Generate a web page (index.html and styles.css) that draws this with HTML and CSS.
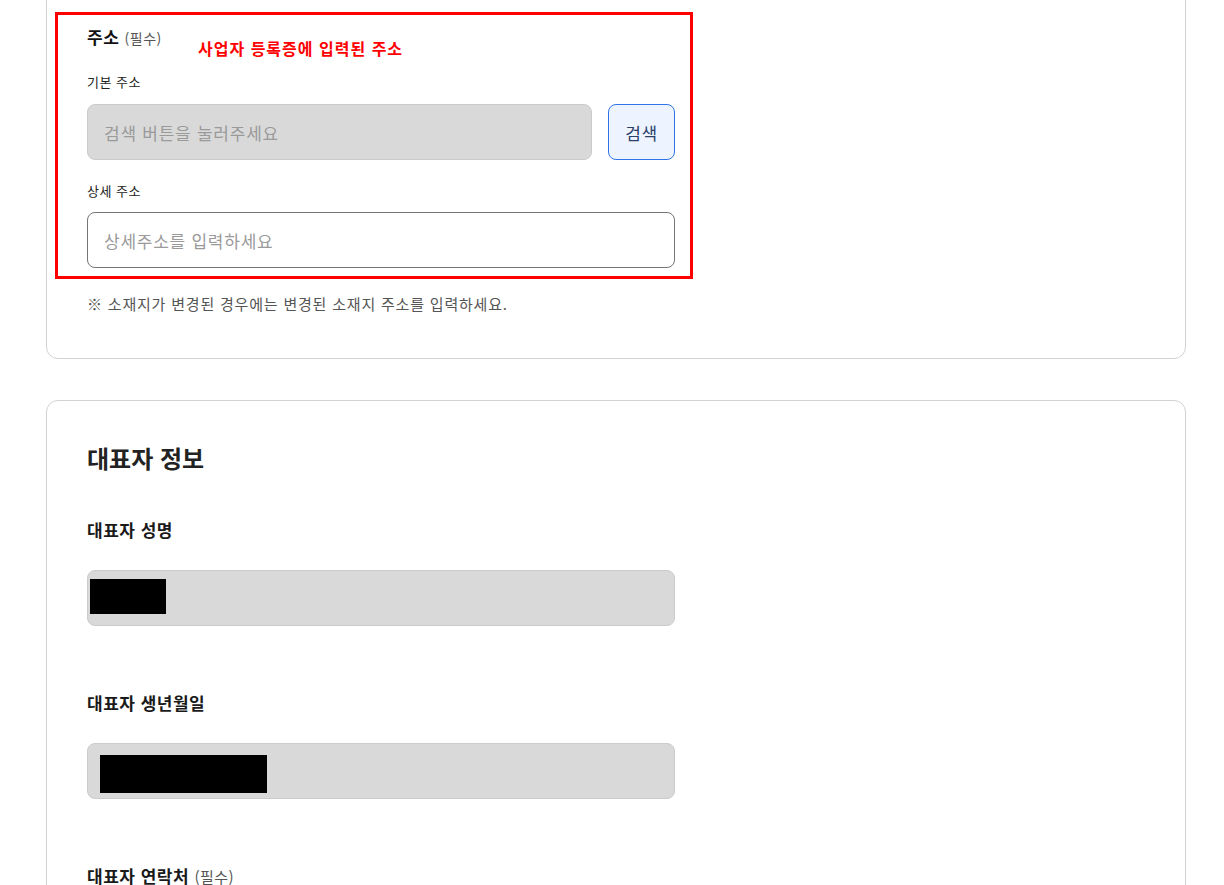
FILE: index.html
```html
<!DOCTYPE html>
<html lang="ko">
<head>
<meta charset="utf-8">
<title>사업자 정보</title>
<link rel="stylesheet" href="styles.css">
</head>
<body>
<div class="page">
  <section class="card card-top">
    <div class="annot-box">
      <div class="field-title"><span class="ft-main">주소</span> <span class="req">(필수)</span></div>
      <div class="annot-text">사업자 등록증에 입력된 주소</div>
      <div class="sub-label lbl-basic">기본 주소</div>
      <div class="row">
        <div class="input input-disabled input-basic"><span class="ph">검색 버튼을 눌러주세요</span></div>
        <button class="btn-search" type="button">검색</button>
      </div>
      <div class="sub-label lbl-detail">상세 주소</div>
      <div class="input input-white"><span class="ph">상세주소를 입력하세요</span></div>
    </div>
    <p class="note">※ 소재지가 변경된 경우에는 변경된 소재지 주소를 입력하세요.</p>
  </section>

  <section class="card card-rep">
    <h2 class="card-title">대표자 정보</h2>
    <div class="field field-first">
      <div class="label">대표자 성명</div>
      <div class="input input-disabled"><span class="redact redact-name"></span></div>
    </div>
    <div class="field">
      <div class="label">대표자 생년월일</div>
      <div class="input input-disabled"><span class="redact redact-birth"></span></div>
    </div>
    <div class="field">
      <div class="label">대표자 연락처 <span class="req">(필수)</span></div>
    </div>
  </section>
</div>
</body>
</html>
```
FILE: styles.css
```css
html, body {
  margin: 0;
  padding: 0;
  background: #ffffff;
  overflow: hidden;
}
body {
  font-family: "Noto Sans CJK KR", "Noto Sans", "Liberation Sans", sans-serif;
  color: #222222;
  letter-spacing: 0.5px;
}
.page {
  width: 1140px;
  margin-left: 46px;
  margin-top: -60px;
}
.card {
  border: 1px solid #d2d2d2;
  border-radius: 12px;
  box-sizing: border-box;
  background: #fff;
}
.card-top {
  padding: 71px 0 42px 8px;
  height: 419px;
}
.annot-box {
  position: relative;
  width: 638px;
  box-sizing: border-box;
  border: 3px solid #ff0000;
  padding: 10px 15px 8px 29px;
}
.field-title {
  height: 24px;
  line-height: 24px;
  font-size: 17px;
}
.ft-main {
  font-weight: 700;
  color: #111;
}
.req {
  font-size: 14px;
  font-weight: 400;
  color: #555;
}
.annot-text {
  position: absolute;
  left: 140px;
  top: 22px;
  line-height: 22px;
  font-size: 16px;
  font-weight: 700;
  color: #ff0000;
  letter-spacing: 1px;
}
.sub-label {
  font-size: 13px;
  line-height: 20px;
  color: #222;
}
.lbl-basic {
  margin-top: 23px;
  margin-bottom: 12px;
}
.lbl-detail {
  margin-top: 21px;
  margin-bottom: 11px;
}
.row {
  display: flex;
  gap: 16px;
}
.input {
  box-sizing: border-box;
  height: 56px;
  width: 588px;
  border-radius: 8px;
  display: flex;
  align-items: center;
  padding-left: 16px;
}
.input-basic {
  width: 505px;
}
.input-disabled {
  background: #d9d9d9;
  border: 1px solid #cbcbcb;
}
.input-white {
  background: #fff;
  border: 1px solid #767676;
}
.ph {
  font-size: 17px;
  color: #9a9a9a;
  letter-spacing: 0.75px;
}
.btn-search {
  box-sizing: border-box;
  width: 67px;
  height: 56px;
  border: 1px solid #2f74e6;
  border-radius: 8px;
  background: #eef4ff;
  color: #2b3f6a;
  font-family: inherit;
  font-size: 17px;
  letter-spacing: 0.5px;
  padding: 0;
}
.note {
  margin: 14px 0 0 32px;
  font-size: 15px;
  line-height: 22px;
  color: #555;
  letter-spacing: 0.8px;
}
.card-rep {
  margin-top: 41px;
  padding: 40px 40px 40px;
  height: 600px;
}
.card-title {
  margin: 0;
  font-size: 24px;
  line-height: 34px;
  font-weight: 700;
  color: #222;
  letter-spacing: 0;
}
.field {
  margin-top: 65px;
}
.field-first {
  margin-top: 43px;
}
.label {
  font-size: 17px;
  line-height: 24px;
  font-weight: 700;
  color: #1a1a1a;
  margin-bottom: 28px;
}
.label .req {
  font-size: 15px;
}
.field .input {
  align-items: flex-start;
  padding-left: 0;
}
.redact {
  display: block;
  background: #000;
}
.redact-name {
  width: 76px;
  height: 35px;
  margin: 8px 0 0 2px;
}
.redact-birth {
  width: 167px;
  height: 38px;
  margin: 11px 0 0 12px;
}
```
